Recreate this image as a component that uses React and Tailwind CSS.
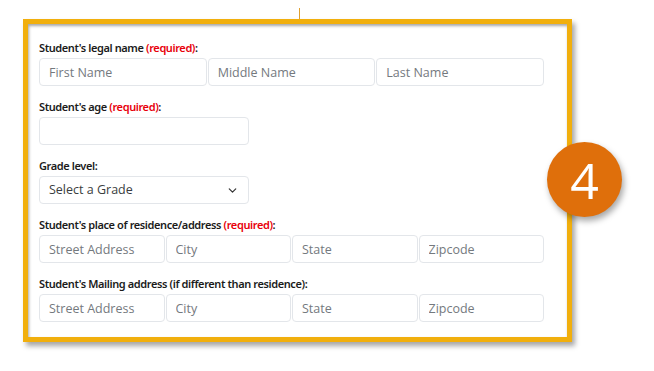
import { ChevronDown } from "lucide-react";

const labelFont = { fontFamily: "'Noto Sans', 'Liberation Sans', sans-serif" };

const Field = ({ placeholder }) => (
  <input
    type="text"
    placeholder={placeholder}
    className="h-[28px] w-full rounded-[4px] border border-[#e3e6ea] bg-white px-[9px] text-[12.5px] text-[#333] placeholder:text-[#74797e] outline-none"
    style={{ fontFamily: "'Open Sans', 'Liberation Sans', sans-serif" }}
  />
);

const Label = ({ text, required }) => (
  <div
    className="mb-[4px] h-[14px] text-[11px] leading-[15px] font-semibold tracking-[-0.4px] text-[#1b1b1b]"
    style={labelFont}
  >
    {text}
    {required && <span className="text-[#e8000b]"> (required)</span>}:
  </div>
);

const App = () => {
  return (
    <div className="relative h-[371px] w-[654px] overflow-hidden bg-white">
      {/* little tick above the frame */}
      <div className="absolute left-[299px] top-[8px] h-[11px] w-px bg-[#e0a030]" />

      <div className="ml-[23px] mt-[19px] w-[549px] border-[5px] border-[#f1af0d] bg-white shadow-[3px_4px_5px_rgba(0,0,0,0.35)]">
        <div className="flex flex-col gap-[13px] pl-[11px] pr-[23px] pt-[16px] pb-[15px] shadow-[inset_1px_2px_3px_rgba(0,0,0,0.35)]">
          <div>
            <Label text="Student's legal name" required />
            <div className="grid grid-cols-3 gap-px">
              <Field placeholder="First Name" />
              <Field placeholder="Middle Name" />
              <Field placeholder="Last Name" />
            </div>
          </div>

          <div>
            <Label text="Student's age" required />
            <div className="w-[210px]">
              <Field placeholder="" />
            </div>
          </div>

          <div>
            <Label text="Grade level" />
            <div
              className="flex h-[28px] w-[210px] items-center justify-between rounded-[4px] border border-[#e3e6ea] bg-white pl-[9px] pr-[9px] text-[12.5px] text-[#3a3d40]"
              style={{ fontFamily: "'Open Sans', 'Liberation Sans', sans-serif" }}
            >
              <span>Select a Grade</span>
              <ChevronDown size={13} strokeWidth={2.2} className="text-[#333]" />
            </div>
          </div>

          <div>
            <Label text="Student's place of residence/address" required />
            <div className="grid grid-cols-4 gap-px">
              <Field placeholder="Street Address" />
              <Field placeholder="City" />
              <Field placeholder="State" />
              <Field placeholder="Zipcode" />
            </div>
          </div>

          <div>
            <Label text="Student's Mailing address (if different than residence)" />
            <div className="grid grid-cols-4 gap-px">
              <Field placeholder="Street Address" />
              <Field placeholder="City" />
              <Field placeholder="State" />
              <Field placeholder="Zipcode" />
            </div>
          </div>
        </div>
      </div>

      {/* step badge */}
      <div
        className="absolute left-[547px] top-[142px] flex h-[75px] w-[75px] items-center justify-center rounded-full bg-[#df6f0b] text-[50px] leading-none text-white shadow-[2px_4px_6px_rgba(0,0,0,0.35)]"
        style={{ fontFamily: "'Open Sans', 'Liberation Sans', sans-serif", fontWeight: 400 }}
      >
        4
      </div>
    </div>
  );
};

export default App;
